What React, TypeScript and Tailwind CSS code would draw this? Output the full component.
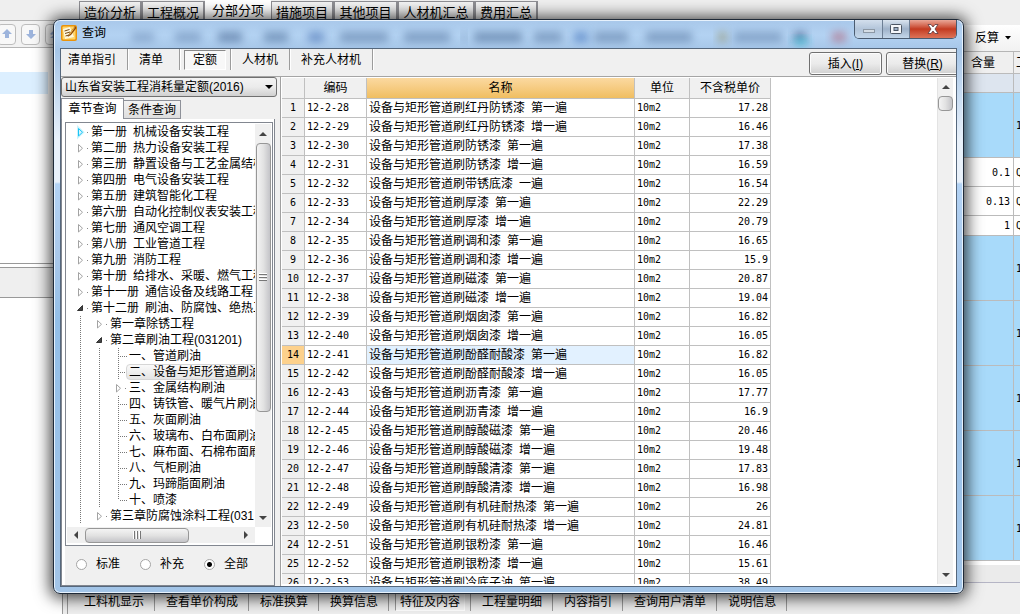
import React from 'react';

const cjk = "font-['Liberation_Sans','Noto_Sans_CJK_SC',sans-serif]";
const mono = "font-['DejaVu_Sans_Mono','Noto_Sans_CJK_SC',monospace] text-[10px]";

const mainTabs = [
  { label: '造价分析', width: 'w-[63px]' },
  { label: '工程概况', width: 'w-[63px]' },
  { label: '分部分项', width: 'w-[66px]', active: true },
  { label: '措施项目', width: 'w-[63px]' },
  { label: '其他项目', width: 'w-[64px]' },
  { label: '人材机汇总', width: 'w-[77px]' },
  { label: '费用汇总', width: 'w-[63px]' },
];

const bottomTabs = [
  '工料机显示', '查看单价构成', '标准换算', '换算信息', '特征及内容',
  '工程量明细', '内容指引', '查询用户清单', '说明信息',
];

type Mark = 'line' | 'tee' | 'corner' | 'closed' | 'hot' | 'open';
type Node = { marks: Mark[]; text: string; selected?: boolean };

const tree: Node[] = [
  { marks: ['hot'], text: '第一册 机械设备安装工程' },
  { marks: ['closed'], text: '第二册 热力设备安装工程' },
  { marks: ['closed'], text: '第三册 静置设备与工艺金属结构' },
  { marks: ['closed'], text: '第四册 电气设备安装工程' },
  { marks: ['closed'], text: '第五册 建筑智能化工程' },
  { marks: ['closed'], text: '第六册 自动化控制仪表安装工程' },
  { marks: ['closed'], text: '第七册 通风空调工程' },
  { marks: ['closed'], text: '第八册 工业管道工程' },
  { marks: ['closed'], text: '第九册 消防工程' },
  { marks: ['closed'], text: '第十册 给排水、采暖、燃气工程' },
  { marks: ['closed'], text: '第十一册 通信设备及线路工程' },
  { marks: ['open'], text: '第十二册 刷油、防腐蚀、绝热工' },
  { marks: ['line', 'closed'], text: '第一章除锈工程' },
  { marks: ['line', 'open'], text: '第二章刷油工程(031201)' },
  { marks: ['line', 'line', 'tee'], text: '一、管道刷油' },
  { marks: ['line', 'line', 'tee'], text: '二、设备与矩形管道刷油', selected: true },
  { marks: ['line', 'line', 'closed'], text: '三、金属结构刷油' },
  { marks: ['line', 'line', 'tee'], text: '四、铸铁管、暖气片刷油' },
  { marks: ['line', 'line', 'tee'], text: '五、灰面刷油' },
  { marks: ['line', 'line', 'tee'], text: '六、玻璃布、白布面刷油' },
  { marks: ['line', 'line', 'tee'], text: '七、麻布面、石棉布面刷油' },
  { marks: ['line', 'line', 'tee'], text: '八、气柜刷油' },
  { marks: ['line', 'line', 'tee'], text: '九、玛蹄脂面刷油' },
  { marks: ['line', 'line', 'corner'], text: '十、喷漆' },
  { marks: ['line', 'closed'], text: '第三章防腐蚀涂料工程(031' },
];

const rows: [string, string, string][] = [
  ['12-2-28', '红丹防锈漆 第一遍', '17.28'],
  ['12-2-29', '红丹防锈漆 增一遍', '16.46'],
  ['12-2-30', '防锈漆 第一遍', '17.38'],
  ['12-2-31', '防锈漆 增一遍', '16.59'],
  ['12-2-32', '带锈底漆 一遍', '16.54'],
  ['12-2-33', '厚漆 第一遍', '22.29'],
  ['12-2-34', '厚漆 增一遍', '20.79'],
  ['12-2-35', '调和漆 第一遍', '16.65'],
  ['12-2-36', '调和漆 增一遍', '15.9'],
  ['12-2-37', '磁漆 第一遍', '20.87'],
  ['12-2-38', '磁漆 增一遍', '19.04'],
  ['12-2-39', '烟囱漆 第一遍', '16.82'],
  ['12-2-40', '烟囱漆 增一遍', '16.05'],
  ['12-2-41', '酚醛耐酸漆 第一遍', '16.82'],
  ['12-2-42', '酚醛耐酸漆 增一遍', '16.05'],
  ['12-2-43', '沥青漆 第一遍', '17.77'],
  ['12-2-44', '沥青漆 增一遍', '16.9'],
  ['12-2-45', '醇酸磁漆 第一遍', '20.46'],
  ['12-2-46', '醇酸磁漆 增一遍', '19.48'],
  ['12-2-47', '醇酸清漆 第一遍', '17.83'],
  ['12-2-48', '醇酸清漆 增一遍', '16.98'],
  ['12-2-49', '有机硅耐热漆 第一遍', '26'],
  ['12-2-50', '有机硅耐热漆 增一遍', '24.81'],
  ['12-2-51', '银粉漆 第一遍', '16.46'],
  ['12-2-52', '银粉漆 增一遍', '15.61'],
  ['12-2-53', '冷底子油 第一遍', '38.49'],
];

function Words({ text }: { text: string }) {
  const parts = text.split(' ');
  return (
    <span className="flex gap-1.5">
      {parts.map((p, i) => (
        <span key={i}>{i < parts.length - 1 ? `${p} ` : p}</span>
      ))}
    </span>
  );
}

function TreeMark({ mark }: { mark: Mark }) {
  return (
    <svg className="h-4 w-[19px] shrink-0" viewBox="0 0 19 16" fill="none" aria-hidden="true">
      {(mark === 'line' || mark === 'tee') && (
        <path d="M8.5 0V16" stroke="#777" strokeDasharray="1 1" />
      )}
      {mark === 'corner' && <path d="M8.5 0V8" stroke="#777" strokeDasharray="1 1" />}
      {(mark === 'tee' || mark === 'corner') && (
        <path d="M10 8.500H18" stroke="#777" strokeDasharray="1 1" />
      )}
      {mark === 'closed' && <path d="M6.500 4.500V12L10.500 8.250Z" stroke="#a3a3a3" fill="#fff" />}
      {mark === 'hot' && (
        <>
          <path d="M6.500 4.500V12L10.500 8.250Z" stroke="#c8f3fc" strokeWidth="3" />
          <path d="M6.500 4.500V12L10.500 8.250Z" stroke="#1cc4f7" fill="#d5f6fe" />
        </>
      )}
      {mark === 'open' && <path d="M10.500 5.500V10.500H5.500Z" fill="#444" stroke="#333" />}
      {(mark === 'closed' || mark === 'hot' || mark === 'open') && (
        <path d="M15 8.500H16" stroke="#888" />
      )}
    </svg>
  );
}

function Arrow({ dir }: { dir: 'up' | 'down' | 'left' | 'right' }) {
  const d = {
    up: 'M0 6L4 2L8 6Z',
    down: 'M0 2L4 6L8 2Z',
    left: 'M6 0L2 4L6 8Z',
    right: 'M2 0L6 4L2 8Z',
  }[dir];
  return (
    <svg viewBox="0 0 8 8" className="h-2 w-2" aria-hidden="true">
      <path d={d} fill="#444" />
    </svg>
  );
}

function MainWindow() {
  return (
    <div className="flex h-full flex-col bg-[#efefef]">
      <nav className="flex h-5 shrink-0 items-end overflow-hidden pl-[79px]">
        {mainTabs.map((t) => (
          <button
            key={t.label}
            className={`${t.width} shrink-0 whitespace-nowrap text-[13px] ${
              t.active
                ? 'h-5 bg-white leading-[22px]'
                : 'h-[19px] border border-b-0 border-r-2 border-[#8e8e93] bg-gradient-to-b from-[#f4f4f4] to-[#e2e2e2] leading-[22px]'
            }`}
          >
            {t.label}
          </button>
        ))}
      </nav>
      <div className="flex min-h-0 flex-1">
        <aside className="flex w-[63px] shrink-0 flex-col border-r border-[#9a9a9a] bg-white">
          <div className="flex h-7 shrink-0 items-center gap-[5px] overflow-hidden border-y border-[#b5b5b5] bg-[#f2f2f2]">
            {['up', 'down', 'top'].map((k) => (
              <button
                key={k}
                aria-label={k}
                className="-ml-[3px] mr-[3px] flex h-[21px] w-[19px] shrink-0 items-center justify-center rounded-sm border border-[#bdbdbd] bg-[#f8f8f8]"
              >
                <svg viewBox="0 0 10 10" className="h-2.5 w-2.5" fill="#9db4dc" aria-hidden="true">
                  {k === 'up' && <path d="M5 0L10 5H7V9H3V5H0Z" />}
                  {k === 'down' && <path d="M5 10L10 5H7V1H3V5H0Z" />}
                  {k === 'top' && <path d="M0 5L5 0L10 5L8 6L5 3L2 6ZM0 9L5 5L10 9Z" />}
                </svg>
              </button>
            ))}
          </div>
          <div className="mt-6 h-[22px] w-12 shrink-0 bg-[#dcefff]" />
          <div className="mt-[169px] h-[35px] shrink-0 border-b border-t border-[#999] bg-[#efefef]">
            <div className="h-1 border-b border-[#999] bg-white" />
          </div>
        </aside>
        <div className="flex min-w-0 flex-1 flex-col">
          <div className="flex min-h-0 flex-1 justify-end">
            <div className="flex w-24 flex-col">
              <div className="mt-[5px] flex h-[27px] shrink-0 items-center justify-end border-b border-[#b5b5b5] bg-gradient-to-b from-white to-[#f1f1f1] pr-[9px] text-xs">
                <button className="flex items-center gap-1.5">
                  反算
                  <svg viewBox="0 0 6 4" className="h-1 w-1.5" aria-hidden="true">
                    <path d="M0 0H6L3 3.500Z" />
                  </svg>
                </button>
              </div>
              <table className={`w-full table-fixed border-separate border-spacing-0 ${mono}`}>
                <thead>
                  <tr className="h-[22px] text-xs">
                    <th className="border-b border-r border-[#bbb] pr-[18px] text-right font-normal">含量</th>
                    <th className="w-1.5 overflow-hidden whitespace-nowrap border-b border-[#bbb] pl-0.5 text-left font-normal">工</th>
                  </tr>
                </thead>
                <tbody>
                  <tr className="h-[19px] bg-[#dde5ef]">
                    <td className="border-b border-r border-[#bbb]" />
                    <td className="border-b border-[#bbb]" />
                  </tr>
                  {[
                    ['', '1', 'h-[65px] bg-[#a8dafa]'],
                    ['0.1', 'Q', 'h-[29px] bg-white'],
                    ['0.13', 'Q', 'h-[29px] bg-white'],
                    ['1', 'Q', 'h-5 bg-white'],
                    ['', '1', 'h-[65px] bg-[#a8dafa]'],
                    ['', '1', 'h-[65px] bg-[#a8dafa]'],
                    ['', '1', 'h-[65px] bg-[#a8dafa]'],
                    ['', '1', 'h-[65px] bg-[#a8dafa]'],
                    ['', '1', 'h-[65px] bg-[#a8dafa]'],
                  ].map(([a, b, c], i) => (
                    <tr key={i} className={c}>
                      <td className="border-b border-r border-[#bbb] p-0 pr-[3px] text-right">{a}</td>
                      <td className="overflow-hidden border-b border-[#bbb] p-0 pl-0.5">{b}</td>
                    </tr>
                  ))}
                </tbody>
              </table>
              <div className="h-1 shrink-0 bg-white" />
              <div className="h-[18px] shrink-0 border-b border-[#b5b5c5] bg-[#ebebeb]" />
            </div>
          </div>
          <nav className="ml-1 flex h-7 shrink-0 items-start overflow-hidden border-l border-[#9a9a9a] pl-[5px] text-xs">
            {bottomTabs.map((t) => (
              <button
                key={t}
                className="h-[25px] shrink-0 whitespace-nowrap border-r border-[#9a9a9a] pl-[11px] pr-2.5 pt-1.5"
              >
                {t === '特征及内容' ? (
                  <span className="-mx-[5px] block border border-[#999] border-b-white border-r-white bg-[#f7f7f7] px-1">{t}</span>
                ) : (
                  t
                )}
              </button>
            ))}
          </nav>
        </div>
      </div>
    </div>
  );
}

const smudges = [
  [132, 22, '#6f8fb8'], [175, 26, '#6686b0'], [218, 24, '#3f5f8b'], [264, 24, '#4a6a95'],
  [308, 16, '#4169ad'], [340, 48, '#54759f'], [404, 46, '#54759f'], [462, 4, '#5c7ca6'],
  [474, 48, '#45658f'], [534, 28, '#54759f'], [574, 14, '#3568b5'], [594, 34, '#54759f'],
  [646, 46, '#54759f'], [718, 9, '#8b8553'], [734, 48, '#5f7fa8'], [794, 12, '#203d70'],
  [832, 14, '#b0566c'],
] as const;

function TitleBar() {
  return (
    <header className="relative flex h-7 shrink-0 items-start overflow-hidden">
      <svg className="absolute inset-0 h-full w-full" aria-hidden="true">
        <defs>
          <filter id="soft" x="-50%" y="-100%" width="200%" height="300%">
            <feGaussianBlur stdDeviation="4" />
          </filter>
        </defs>
        {smudges.map(([x, w, c]) => (
          <rect key={x} x={x - 60} y="12" width={w} height="10" fill={c} opacity="0.55" filter="url(#soft)" />
        ))}
        <rect x="734" y="19" width="14" height="5" fill="#2fd0e0" opacity="0.8" filter="url(#soft)" />
      </svg>
      <div className="relative flex items-center gap-[5px] pl-px pt-[5px] text-xs">
        <svg viewBox="0 0 16 16" className="h-4 w-4" aria-hidden="true">
          <rect width="16" height="16" rx="2" fill="#e9930c" />
          <rect x="1.500" y="1.500" width="13" height="13" rx="1" fill="#ffd66b" />
          <path d="M2 4L9 2L13 12L4 14Z" fill="#fff8df" />
          <path d="M3.500 6L8.500 4.500M4 8.500L9 7M4.500 11L8 10" stroke="#7a4b12" strokeWidth="1" />
          <path d="M14 1L8 9L6.500 12L10 10L15.500 3Z" fill="#8e4a0a" />
          <path d="M13.500 2.500L8.500 9.500" stroke="#f7c25a" strokeWidth="1" />
        </svg>
        <h1>查询</h1>
      </div>
      <div className="relative ml-auto flex h-[19px] overflow-hidden rounded-b-[5px] border border-t-0 border-[#4a5b70]">
        <button aria-label="最小化" className="flex w-7 items-center justify-center border-r border-[#6d7f95] bg-gradient-to-b from-[#d3dfed] via-[#b3c5da] to-[#c4d7ea]">
          <svg viewBox="0 0 12 12" className="h-3 w-3" aria-hidden="true">
            <rect x=".5" y="6.500" width="11" height="3" fill="#d5dde5" stroke="#8c98a5" />
          </svg>
        </button>
        <button aria-label="最大化" className="flex w-[27px] items-center justify-center border-r border-[#6d7f95] bg-gradient-to-b from-[#dbe5f0] via-[#9fb2c9] to-[#c4d7ea]">
          <svg viewBox="0 0 12 10" className="h-2.5 w-3" aria-hidden="true">
            <rect x=".5" y=".5" width="11" height="9" rx="1" fill="#f5f7fa" stroke="#4c5664" />
            <rect x="4" y="3.500" width="4" height="3" fill="#9fb2c9" stroke="#4c5664" />
          </svg>
        </button>
        <button aria-label="关闭" className="flex w-[46px] items-center justify-center bg-gradient-to-b from-[#e9a798] via-[#c33a20] to-[#dd7358]">
          <svg viewBox="0 0 12 10" className="h-2.5 w-3" aria-hidden="true">
            <path d="M1 .5H4L6 3L8 .5H11L8 5L11 9.500H8L6 7L4 9.500H1L4 5Z" fill="#fff" stroke="#5a3a40" strokeWidth=".8" />
          </svg>
        </button>
      </div>
    </header>
  );
}

function Toolbar() {
  const items = ['清单指引', '清单', '定额', '人材机', '补充人材机'];
  const sep = 'border-r border-[#9c9c9c] shadow-[1px_0_0_#fff]';
  return (
    <div className="flex h-7 shrink-0 items-start overflow-hidden border-b border-[#a5a5a5] bg-[#f0f0f0] text-xs">
      {items.map((t) =>
        t === '定额' ? (
          <div key={t} className={`flex h-[21px] items-start px-1 ${sep}`}>
            <button aria-pressed="true" className="mt-px h-5 w-[42px] border border-[#8a8a8a] border-b-white border-r-white bg-[#f8f8f8] leading-[18px]">
              {t}
            </button>
          </div>
        ) : (
          <button
            key={t}
            className={`h-[21px] leading-[22px] ${sep} ${t === '清单指引' ? 'pl-[7px] pr-[11px]' : t === '清单' ? 'pl-[11px] pr-4' : 'px-[11px]'}`}
          >
            {t}
          </button>
        ),
      )}
      <div className="-mr-[3px] ml-auto flex gap-1 pt-[3px]">
        {[
          ['插入', 'I'],
          ['替换', 'R'],
        ].map(([t, k]) => (
          <button
            key={k}
            className="h-[23px] w-[73px] rounded-[3px] border border-[#707070] bg-gradient-to-b from-[#f3f3f3] via-[#ebebeb] to-[#d0d0d0] shadow-[inset_0_0_0_1px_#fcfcfc]"
          >
            {t}(<u>{k}</u>)
          </button>
        ))}
      </div>
    </div>
  );
}

function QuotaTree() {
  return (
    <div className="flex min-h-0 flex-1 flex-col border border-[#828790] bg-white p-px pb-0.5">
      <div className="flex min-h-0 flex-1">
        <ul className="min-w-0 flex-1 overflow-hidden pl-[5px] text-xs leading-4">
          {tree.map((n) => (
            <li key={n.text} className="flex h-4 whitespace-nowrap">
              {n.marks.map((m, i) => (
                <TreeMark key={i} mark={m} />
              ))}
              {n.selected ? (
                <span className="-ml-[3px] rounded-sm border border-[#d6d6d6] bg-gradient-to-b from-[#fafafa] to-[#e4e4e4] pl-0.5 leading-[14px]">
                  {n.text}
                </span>
              ) : (
                <Words text={n.text} />
              )}
            </li>
          ))}
        </ul>
        <div className="flex w-4 shrink-0 flex-col items-center bg-[#f0f0f0]">
          <button aria-label="向上" className="flex h-[19px] w-4 shrink-0 items-center justify-center">
            <Arrow dir="up" />
          </button>
          <div className="flex w-[15px] flex-[268] flex-col items-center justify-center gap-px rounded-sm border border-[#979797] bg-gradient-to-r from-[#f4f4f4] via-[#e2e2e2] to-[#c4c4c8]">
            {[0, 1, 2].map((i) => (
              <i key={i} className="block h-0.5 w-2 border-b border-[#777] bg-white" />
            ))}
          </div>
          <div className="flex-[97]" />
          <button aria-label="向下" className="flex h-[19px] w-4 shrink-0 items-center justify-center">
            <Arrow dir="down" />
          </button>
        </div>
      </div>
      <div className="mr-4 flex h-4 shrink-0 items-center bg-[#f0f0f0]">
        <button aria-label="向左" className="flex w-[18px] shrink-0 items-center justify-center">
          <Arrow dir="left" />
        </button>
        <div className="flex h-[15px] flex-[103] items-center justify-center gap-px rounded-sm border border-[#979797] bg-gradient-to-b from-[#f4f4f4] via-[#e2e2e2] to-[#c4c4c8]">
          {[0, 1, 2].map((i) => (
            <i key={i} className="block h-2 w-0.5 border-r border-[#777] bg-white" />
          ))}
        </div>
        <div className="flex-[49]" />
        <button aria-label="向右" className="flex w-[18px] shrink-0 items-center justify-center">
          <Arrow dir="right" />
        </button>
      </div>
    </div>
  );
}

function SidePanel() {
  return (
    <div className="flex w-[216px] shrink-0 flex-col bg-[#f0f0f0] text-xs">
      <div className="relative h-5 shrink-0">
        <select
          aria-label="定额库"
          className="h-5 w-full appearance-none rounded-[3px] border border-[#707070] bg-gradient-to-b from-[#f3f3f3] via-[#ebebeb] to-[#d0d0d0] pl-[3px] text-xs leading-4"
        >
          <option>山东省安装工程消耗量定额(2016)</option>
        </select>
        <svg viewBox="0 0 8 4" className="pointer-events-none absolute right-1 top-2 h-1 w-2" aria-hidden="true">
          <path d="M0 0H8L4 4Z" />
        </svg>
      </div>
      <div role="tablist" className="flex h-[22px] shrink-0 items-end pt-px">
        <button role="tab" aria-selected="true" className="h-[21px] w-[63px] border border-b-0 border-[#8e9199] bg-white pb-px leading-[18px]">
          章节查询
        </button>
        <button role="tab" aria-selected="false" className="h-[19px] w-[57px] border border-l-0 border-[#8e9199] bg-gradient-to-b from-[#f2f2f2] to-[#dedede] leading-[18px]">
          条件查询
        </button>
      </div>
      <div className="mr-0.5 flex min-h-0 flex-1 flex-col border border-t-0 border-[#828790] bg-[#f0f0f0]">
        <div className="flex min-h-0 flex-1 flex-col border-l-[3px] border-r border-white bg-white pt-[3px]">
          <QuotaTree />
        </div>
        <div className="flex h-[39px] shrink-0 items-center gap-5 border-l-[3px] border-white pb-[3px] pl-[11px]">
          {['标准', '补充', '全部'].map((t) => (
            <label key={t} className="flex items-center gap-[9px]">
              <input
                type="radio"
                name="scope"
                defaultChecked={t === '全部'}
                className="h-[11px] w-[11px] appearance-none rounded-full border border-[#a5a5a5] bg-white checked:bg-[radial-gradient(circle,#000_0_2px,#fff_3px)]"
              />
              {t}
            </label>
          ))}
        </div>
      </div>
    </div>
  );
}

function ResultTable() {
  const line = 'border-b border-r border-[#c0c0c0] p-0';
  return (
    <div className="ml-[3px] flex min-w-0 flex-1 border-l border-[#a0a0a0] bg-white pb-0.5 pl-px pt-px">
      <div className="min-w-0 flex-1 overflow-hidden">
        <table className="w-[489px] table-fixed border-separate border-spacing-0 whitespace-nowrap text-xs">
          <thead>
            <tr className="h-[21px] bg-[#f0f0f0]">
              <th className={`w-[23px] ${line}`} />
              <th className={`w-[62px] font-normal ${line}`}>编码</th>
              <th className={`w-[268px] bg-gradient-to-b from-[#fbd9a0] to-[#f0be60] font-normal ${line}`}>名称</th>
              <th className={`w-[55px] font-normal ${line}`}>单位</th>
              <th className={`w-[81px] font-normal ${line}`}>不含税单价</th>
            </tr>
          </thead>
          <tbody>
            {rows.map(([code, name, price], i) => (
              <tr key={code} className="h-[19px] leading-4">
                <td className={`text-center ${mono} ${line} ${i === 13 ? 'bg-[#fdd18c]' : 'bg-[#f0f0f0]'}`}>{i + 1}</td>
                <td className={`${line} ${mono}`}>
                  <div className="pl-0.5">{code}</div>
                </td>
                <td className={`${line} ${i === 13 ? 'bg-[#e2f1ff]' : ''}`}>
                  <div className="pl-0.5">
                    <Words text={`设备与矩形管道刷${name}`} />
                  </div>
                </td>
                <td className={`${line} ${mono}`}>
                  <div className="pl-0.5">10m2</div>
                </td>
                <td className={`text-right ${line} ${mono}`}>
                  <div className="pr-0.5">{price}</div>
                </td>
              </tr>
            ))}
          </tbody>
        </table>
      </div>
      <div className="mr-[3px] flex w-4 shrink-0 flex-col items-center border-l border-[#e3e3e3] bg-[#f0f0f0]">
        <button aria-label="向上" className="flex h-[18px] shrink-0 items-center justify-center">
          <Arrow dir="up" />
        </button>
        <div className="h-[15px] w-[15px] shrink-0 rounded-sm border border-[#979797] bg-gradient-to-r from-[#f4f4f4] via-[#e2e2e2] to-[#c4c4c8]" />
        <div className="flex-1" />
        <button aria-label="向下" className="flex h-[18px] shrink-0 items-center justify-center">
          <Arrow dir="down" />
        </button>
      </div>
    </div>
  );
}

export default function App() {
  return (
    <div className={`relative h-screen overflow-hidden text-black ${cjk}`}>
      <MainWindow />
      <section
        role="dialog"
        aria-label="查询"
        className="absolute bottom-5 left-[53px] right-14 top-[19px] flex flex-col rounded-[7px] border border-[#1f2a38] bg-[linear-gradient(180deg,#a9c8ea_0,#b3d2f2_15px,#a6c6e8_30px,#e9f1fa_120px,#e9f1fa_162px,#b3d3f5_164px,#a9c8ea_240px,#93bfe8_300px,#a3c5e8_100%)] px-1.5 pb-1.5 shadow-[0_1px_16px_3px_rgba(0,0,0,0.75),inset_0_0_0_1px_#e6f1fc]"
      >
        <TitleBar />
        <div className="flex min-h-0 flex-1 flex-col border border-[#55677c] bg-[#f0f0f0]">
          <Toolbar />
          <div className="flex min-h-0 flex-1">
            <SidePanel />
            <ResultTable />
          </div>
        </div>
      </section>
    </div>
  );
}
